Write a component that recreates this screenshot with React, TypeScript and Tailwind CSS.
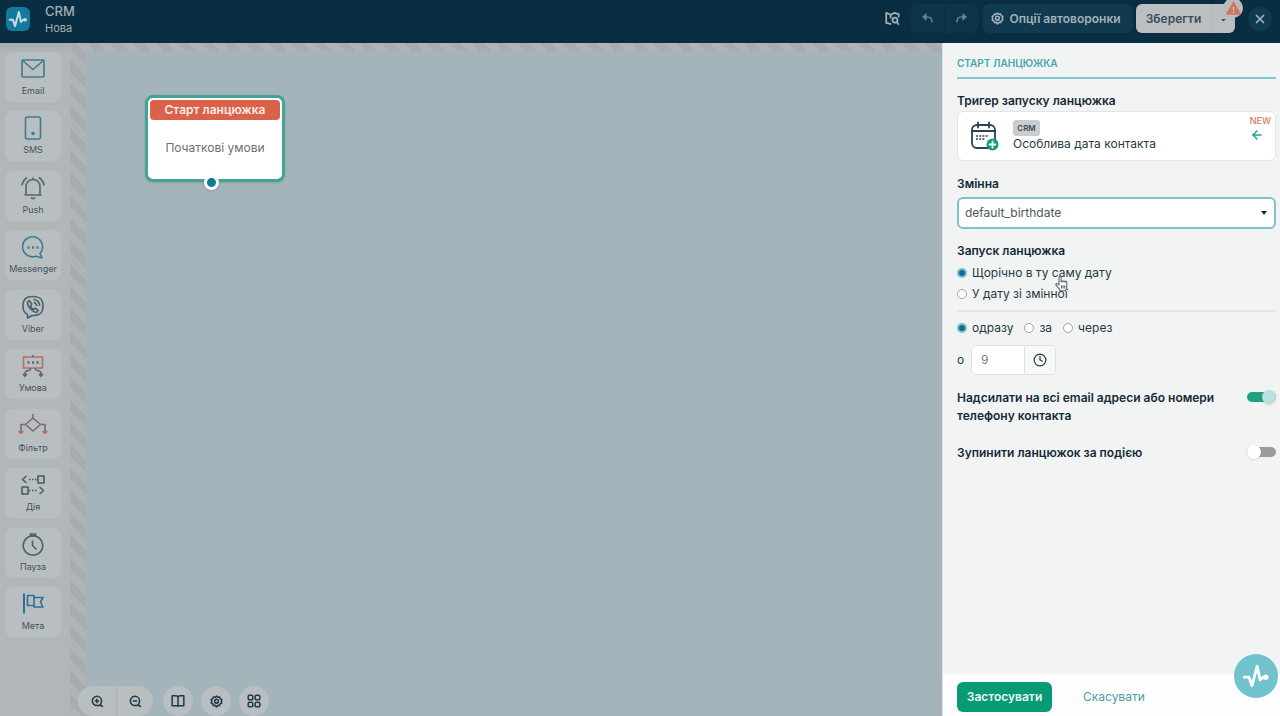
import React from "react";
import { ArrowLeft, Clock, X } from "lucide-react";
import clsx from "clsx";

type IconProps = { className?: string };

function Pulse({ className }: IconProps) {
  return (
    <svg viewBox="0 0 24 24" className={className} fill="none" stroke="currentColor" strokeWidth="2.4" strokeLinejoin="round" strokeLinecap="round" aria-hidden="true">
      <path d="M2 13h4l2.500 7.500L13 3.500l2.500 12 2.500-2.500h3" />
      <circle cx="20.5" cy="13" r="2.2" fill="currentColor" stroke="none" />
    </svg>
  );
}

function Line({ className, children }: IconProps & { children: React.ReactNode }) {
  return (
    <svg viewBox="0 0 24 24" className={className} fill="none" stroke="currentColor" strokeWidth="1.6" strokeLinejoin="round" aria-hidden="true">
      {children}
    </svg>
  );
}

function Gear({ className }: IconProps) {
  return (
    <svg viewBox="0 0 24 24" className={className} fill="none" stroke="currentColor" strokeWidth="2.8" strokeLinejoin="round" aria-hidden="true">
      <path d="M9.5 4 12 2l2.5 2 3.3-.5 1 3.2 3 1.6-1 3.2 1 3.3-3 1.6-1 3.2-3.3-.6L12 22l-2.500-3-3.300.6-1-3.200-3-1.600 1-3.300-1-3.200 3-1.600 1-3.200z" />
      <circle cx="12" cy="11.500" r="3.500" />
    </svg>
  );
}

function Zoom({ className, plus }: IconProps & { plus?: boolean }) {
  return (
    <svg viewBox="0 0 24 24" className={className} fill="none" stroke="currentColor" strokeWidth="2.8" aria-hidden="true">
      <path d="M18.500 19.500H11a8.500 8.500 0 1 1 8.500-8.500c0 3-1 5-2.500 6.500l5 4.500" />
      <path d="M7 11h8" />
      {plus && <path d="M11 7v8" />}
    </svg>
  );
}

function BentArrow({ className }: IconProps) {
  return (
    <svg viewBox="0 0 24 24" className={className} fill="none" stroke="currentColor" strokeWidth="2.600" strokeLinejoin="round" aria-hidden="true">
      <path d="M3 9h9c5 0 8.500 4 8.500 10.500" />
      <path d="M9.500 3 3 9l6.500 6z" fill="currentColor" strokeWidth="1.500" />
    </svg>
  );
}

const blocks = [
  {
    label: "Email",
    color: "text-[#3f7c8d]",
    icon: (
      <>
        <rect x="1" y="3" width="22" height="17" rx="1" />
        <path d="m1.500 3.500 10.500 9 10.500-9" />
      </>
    ),
  },
  {
    label: "SMS",
    color: "text-[#3f7c8d]",
    icon: (
      <>
        <rect x="4.500" y="1" width="15" height="22" rx="2" />
        <circle cx="12" cy="17.500" r="1" fill="currentColor" />
      </>
    ),
  },
  {
    label: "Push",
    color: "text-[#54656e]",
    icon: (
      <>
        <path d="M12 3.500c-4 0-7 3-7 7V19H3.500M12 3.500c4 0 7 3 7 7V19h1.500M3.500 19h17M12 3.500V1.500M10 21.500c1 1.500 3 1.500 4 0" />
        <path d="M1 9.500C1.500 6 3 3.500 6 1.500M23 9.500C22.500 6 21 3.500 18 1.500" />
      </>
    ),
  },
  {
    label: "Messenger",
    color: "text-[#347f96]",
    icon: (
      <>
        <path d="M19 18.500A10 10 0 1 0 15 21.200l6 1.800z" />
        <path d="M6.500 12.500h2M11 12.500h2M15.500 12.500h2" strokeWidth="2.400" />
      </>
    ),
  },
  {
    label: "Viber",
    color: "text-[#48616d]",
    icon: (
      <>
        <path d="M12 1.500c7 0 10 2.500 10 9.500s-3 9.500-10 9.500h-1L6.500 23v-3.500C3 18 2 15.500 2 11c0-7 3-9.500 10-9.500z" />
        <path d="M8.200 5.500 6.500 7c-.5 4 4.500 10 9 10.500l1.700-2-3-2.300-1.700 1.300c-1.500-.7-2.500-2-3-3.500L10.700 9z" />
        <path d="M12.500 7.500c2 .3 3 1.500 3.200 3.500M12.500 4.500c3.500.3 6 2.500 6.200 6.500" />
      </>
    ),
  },
  {
    label: "Умова",
    color: "text-[#5c666c]",
    icon: (
      <>
        <rect x="2.500" y="3" width="19" height="11" stroke="#b9705f" />
        <path d="M6.500 8.500h2M11 8.500h2M15.500 8.500h2" strokeWidth="2.400" />
        <path d="M12 1v2M9.500 14v1.500C9.500 17 4 16 4 19v3M14.500 14v1.500c0 1.500 5.500.5 5.500 3.500v3M2 20l2 2.300L6 20M18 20l2 2.300 2-2.300" />
      </>
    ),
  },
  {
    label: "Фільтр",
    color: "text-[#6b7073]",
    icon: (
      <>
        <path d="M12 0v4M12 4l7.500 6.500L12 17l-7.500-6.500z" />
        <path d="M4.500 10.500H0V18M19.500 10.500H24V18" />
        <path d="M-2.500 17 0 19.500 2.500 17M21.500 17l2.500 2.500 2.500-2.500M4 10.500h2M18 10.500h2" stroke="#cf6a52" />
      </>
    ),
  },
  {
    label: "Дія",
    color: "text-[#4a5a64]",
    icon: (
      <>
        <path d="M5.500 3 1.500 6.500l4 3.500M8 6.500h1.500M11 6.500h1.500M14 6.500h1.500M17 3h6v7h-6z" />
        <path d="M18.500 14l4 3.500-4 3.500M15.500 17.500H14M12.500 17.500H11M9.500 17.500H8M1 14h6v7H1z" />
      </>
    ),
  },
  {
    label: "Пауза",
    color: "text-[#4b606c]",
    icon: (
      <>
        <circle cx="12" cy="12.500" r="9.800" />
        <path d="M9.500 1h5v1.700h-5zM11.500 7.500v5l4 4" />
      </>
    ),
  },
  {
    label: "Мета",
    color: "text-[#2f6f92]",
    icon: (
      <>
        <path d="M3 1.500v20" strokeWidth="2" />
        <path d="M6.500 3.500H13v10H6.500zM13 5.500h9L19.500 10l2.500 5h-9v-1.500" />
      </>
    ),
  },
];

const toolButton = "flex size-[30px] items-center justify-center rounded-full bg-[#b9bec1]";

function Header() {
  return (
    <header className="flex h-[43px] shrink-0 items-start bg-[#0a2e41] pr-2 pl-[6px]">
      <a href="#" aria-label="CRM" className="mt-[7px] flex size-6 items-center justify-center rounded-md bg-[#14789f] text-[#c9dce2]">
        <Pulse className="size-5" />
      </a>
      <div className="ml-[15px] pt-[2px] text-[#a3adb2]">
        <h1 className="text-[13px] leading-[18px] font-medium">CRM</h1>
        <p className="text-[11px] leading-4">Нова</p>
      </div>
      <div className="ml-auto flex items-center pt-1 text-[#a5b1b8]">
        <button aria-label="Довідка" className="mr-[11px]">
          <svg viewBox="0 0 24 24" className="size-[15px]" fill="none" stroke="currentColor" strokeWidth="2.8" strokeLinejoin="round">
            <path d="M10 21 2 19V3l7 3 6-3 7 2v5M9 6v6" />
            <circle cx="16" cy="14.500" r="4" />
            <path d="m19 17.500 3 4.500" />
          </svg>
        </button>
        <div className="flex h-[29px] rounded-md bg-[#0d3549]">
          <button aria-label="Назад" className="flex w-[34px] items-center justify-center border-r border-[#0a2e41] text-[#71858f]">
            <BentArrow className="size-[13px]" />
          </button>
          <button aria-label="Вперед" className="flex w-[33px] items-center justify-center text-[#71858f]">
            <BentArrow className="size-[13px] -scale-x-100" />
          </button>
        </div>
        <button className="ml-[5px] flex h-[29px] w-[150px] items-center justify-center gap-[5px] rounded-md bg-[#103a50] pr-1 text-[12px] font-semibold whitespace-nowrap">
          <Gear className="size-[13px]" />
          Опції автоворонки
        </button>
        <div className="relative ml-[3px] flex h-[29px] rounded-md bg-[#bbbfc2] text-[#3b4d59]">
          <button className="w-[75px] text-[12px] font-semibold">Зберегти</button>
          <button aria-label="Ще" className="flex w-6 items-center justify-center border-l border-[#b1b6ba]">
            <svg viewBox="0 0 6 4" className="mt-1 w-[5px]" fill="currentColor"><path d="M0 0h6L3 3z" /></svg>
          </button>
          <span className="absolute -top-[6px] -right-2 flex size-5 items-center justify-center rounded-full bg-[#b8bcbf]">
            <svg viewBox="0 0 24 24" className="size-[15px]" aria-hidden="true">
              <path d="M12 2 23 21H1z" fill="#d2755f" stroke="#d2755f" strokeWidth="2" strokeLinejoin="round" />
              <path d="M12 9v6M12 17v2" stroke="#d9c9c5" strokeWidth="2" />
            </svg>
          </span>
        </div>
        <button aria-label="Закрити" className="ml-[13px] flex size-6 items-center justify-center rounded-full bg-[#103a50]">
          <X className="size-[14px]" strokeWidth={3} />
        </button>
      </div>
    </header>
  );
}

function Sidebar() {
  return (
    <aside className="w-[70px] shrink-0 bg-linear-to-b from-[#a8adb0] to-[#b1b6b8] to-[12px] pt-[9px] pl-[5px]">
      <nav className="flex h-[585px] flex-col justify-between">
        {blocks.map(({ label, color, icon }) => (
          <button key={label} className="flex h-[50px] w-14 flex-col items-center rounded-lg bg-[#b9bec1] pt-[5px]">
            <Line className={clsx("size-6 overflow-visible", color)}>{icon}</Line>
            <span className="mt-1 text-[9px] leading-3 text-[#46545d]">{label}</span>
          </button>
        ))}
      </nav>
    </aside>
  );
}

function Canvas() {
  return (
    <main className="relative min-w-0 grow bg-[repeating-linear-gradient(45deg,#b1b4b6_0_8px,#a9acaf_8px_16px)] pt-2 pl-4">
      <div className="h-full bg-[#a3b5ba]" />
      {/* start node */}
      <div className="absolute top-[52px] left-[75px] h-[87px] w-[140px] rounded-lg border-[3px] border-[#43a394] bg-white p-[2px] shadow-sm">
        <h2 className="rounded bg-[#d9624a] text-center text-[12px] leading-5 font-semibold text-[#fdece7]">Старт ланцюжка</h2>
        <p className="mt-5 text-center text-[12px] leading-4 whitespace-nowrap text-[#6b7175]">Початкові умови</p>
        <span className="absolute -bottom-[11px] left-[56px] size-[15px] rounded-full border-[3px] border-white bg-[#127996] shadow" />
      </div>
      <div className="absolute bottom-0 left-2 flex gap-2 text-[#20394a]">
        <div className="flex h-[30px] rounded-full bg-[#b9bec1]">
          <button aria-label="Збільшити" className="flex w-[39px] items-center justify-center border-r border-[#adb3b7]">
            <Zoom plus className="size-[13px]" />
          </button>
          <button aria-label="Зменшити" className="flex w-9 items-center justify-center">
            <Zoom className="size-[13px]" />
          </button>
        </div>
        <button aria-label="Карта" className={clsx(toolButton, "ml-[2px]")}>
          <svg viewBox="0 0 24 24" className="size-[14px]" fill="none" stroke="currentColor" strokeWidth="2.600" strokeLinejoin="round">
            <path d="M2 3h6c3 0 4 1 4 3 0-2 1-3 4-3h6v17h-8l-2 1-2-1H2zM12 5v16" />
          </svg>
        </button>
        <button aria-label="Налаштування" className={toolButton}>
          <Gear className="size-[13px]" />
        </button>
        <button aria-label="Елементи" className={toolButton}>
          <svg viewBox="0 0 24 24" className="size-[14px]" fill="none" stroke="currentColor" strokeWidth="2.600">
            <rect x="2" y="2" width="8" height="8" rx="2.500" />
            <rect x="14" y="2" width="8" height="8" rx="2.500" />
            <rect x="2" y="14" width="8" height="8" rx="2.500" />
            <rect x="14" y="14" width="8" height="8" rx="2.500" />
          </svg>
        </button>
      </div>
    </main>
  );
}

function Radio({ name, label, checked }: { name: string; label: string; checked?: boolean }) {
  return (
    <label className="flex items-center gap-[5px] text-[12px] leading-4 text-[#263a46]">
      <input
        type="radio"
        name={name}
        defaultChecked={checked}
        className="size-[10px] appearance-none rounded-full border border-[#9da4a8] bg-white checked:border-2 checked:border-[#7cbccd] checked:bg-[#0d6e92]"
      />
      {label}
    </label>
  );
}

function Toggle({ label, checked }: { label: string; checked?: boolean }) {
  return (
    <label className="flex items-start justify-between text-[12px] leading-[18px] font-semibold text-[#152b39]">
      <span className="w-[264px]">{label}</span>
      <input
        type="checkbox"
        role="switch"
        defaultChecked={checked}
        className="relative mt-[3px] h-[10px] w-[29px] appearance-none rounded-full bg-[#9a9c9e] before:absolute before:-top-[2px] before:left-0 before:size-[14px] before:rounded-full before:bg-white before:shadow before:content-[''] checked:bg-[#1fa184] checked:before:left-[15px] checked:before:bg-[#bbe0e0]"
      />
    </label>
  );
}

function Panel() {
  const heading = "text-[12px] leading-4 font-semibold text-[#152b39]";
  return (
    <section className="flex w-[338px] shrink-0 flex-col border-l border-[#dfe3e5] bg-[#f2f4f4]">
      <div className="grow pt-3 pr-1 pl-[14px]">
        <h2 className="border-b-2 border-[#83c5d0] pb-[6px] text-[10px] leading-4 font-semibold text-[#43a6ad]">СТАРТ ЛАНЦЮЖКА</h2>
        <h3 className={clsx(heading, "mt-[14px]")}>Тригер запуску ланцюжка</h3>
        <div className="mt-[2px] flex h-[50px] rounded-md border border-[#e1e5e6] bg-white pr-1 pl-3">
          <svg viewBox="0 0 30 30" className="mt-[9px] size-[30px] shrink-0" fill="none" stroke="#2c4350" strokeWidth="1.800" strokeLinecap="round">
            <rect x="2" y="4" width="23" height="23" rx="5" />
            <path d="M2 10h23M8 1.500v5M19 1.500v5" />
            <path d="M6 15h13M6 18h9" strokeWidth="1.600" strokeLinecap="butt" strokeDasharray="2 1.200" />
            <circle cx="22.500" cy="23.500" r="6" fill="#139b78" stroke="none" />
            <path d="M22.500 20.500v6M19.500 23.500h6" stroke="white" />
          </svg>
          <div className="ml-[13px] pt-2">
            <span className="block w-[27px] rounded-[3px] bg-[#c9cdce] text-center text-[8px] leading-4 font-semibold text-[#3d4f59]">CRM</span>
            <p className="text-[12px] leading-4 text-[#263a46]">Особлива дата контакта</p>
          </div>
          <div className="ml-auto flex flex-col items-center pt-[3px]">
            <span className="text-[9px] leading-3 font-medium text-[#e0775e]">NEW</span>
            <button aria-label="Змінити тригер" className="mt-[1px] mr-[6px] text-[#25a093]">
              <ArrowLeft className="size-[14px]" strokeWidth={2.5} />
            </button>
          </div>
        </div>
        <label htmlFor="variable" className={clsx(heading, "mt-[15px] block")}>Змінна</label>
        <div className="relative mt-[5px]">
          <select id="variable" className="h-8 w-full appearance-none rounded-md border-2 border-[#7cc3d0] bg-white px-[6px] pb-[1px] text-[12px] text-[#4a5860]">
            <option>default_birthdate</option>
          </select>
          <svg viewBox="0 0 6 4" className="pointer-events-none absolute top-[14px] right-[9px] w-[6px]" fill="#152b39"><path d="M0 0h6L3 4z" /></svg>
        </div>
        <fieldset className="relative mt-[14px] border-b-2 border-[#e2e5e6] pb-2">
          <legend className={heading}>Запуск ланцюжка</legend>
          <div className="mt-[6px] flex flex-col gap-[5px]">
            <Radio name="mode" label="Щорічно в ту саму дату" checked />
            <Radio name="mode" label="У дату зі змінної" />
          </div>
          {/* pointer hand */}
          <svg viewBox="0 0 16 20" className="pointer-events-none absolute top-4 left-[98px] h-[17px] w-[13px]" fill="white" stroke="#59646b" strokeWidth="1.300" strokeLinejoin="round">
            <path d="M5 12V2.500c0-2 2.500-2 2.500 0V8c0-1.500 2.300-1.500 2.300 0 0-1.300 2.300-1.300 2.300 0 0-1 2.400-1 2.400.700V14c0 2-1 3-1.500 5H6.500C5.500 16 3 14 1.300 12c-.8-1.500.8-2.300 1.900-1.500z" />
            <path d="M8 12v4M10 12v4M12 12v4" />
          </svg>
        </fieldset>
        <div className="mt-2 flex gap-[11px]">
          <Radio name="when" label="одразу" checked />
          <Radio name="when" label="за" />
          <Radio name="when" label="через" />
        </div>
        <div className="mt-[9px] flex h-[30px] items-center text-[#263a46]">
          <label htmlFor="hour" className="w-[14px] text-[12px]">о</label>
          <div className="flex h-full w-[85px] overflow-hidden rounded-md border border-[#dde1e2]">
            <input id="hour" defaultValue="9" className="w-[53px] border-r border-[#dde1e2] bg-white px-[9px] text-[12px] text-[#737b80]" />
            <button aria-label="Обрати час" className="flex grow items-center justify-center bg-[#f7f8f8]">
              <Clock className="size-[14px]" />
            </button>
          </div>
        </div>
        <div className="mt-[14px] flex flex-col gap-[19px]">
          <Toggle label="Надсилати на всі email адреси або номери телефону контакта" checked />
          <Toggle label="Зупинити ланцюжок за подією" />
        </div>
      </div>
      <footer className="flex h-[42px] items-center gap-[31px] bg-[#fdfdfd] pl-[14px] text-[12px]">
        <button className="mt-1 h-[30px] w-[95px] rounded-md bg-[#079b75] font-semibold text-[#e9f7f3]">Застосувати</button>
        <button className="mt-1 text-[#4a9fab]">Скасувати</button>
      </footer>
    </section>
  );
}

export default function App() {
  return (
    <div className="flex h-screen flex-col overflow-hidden bg-[#b1b6b8] font-[Inter,sans-serif]">
      <Header />
      <div className="flex min-h-0 grow">
        <Sidebar />
        <Canvas />
        <Panel />
      </div>
      <button aria-label="Чат" className="fixed right-[2px] bottom-[18px] flex size-11 items-center justify-center rounded-full bg-[#70c2cd] text-white">
        <Pulse className="size-7" />
      </button>
    </div>
  );
}
